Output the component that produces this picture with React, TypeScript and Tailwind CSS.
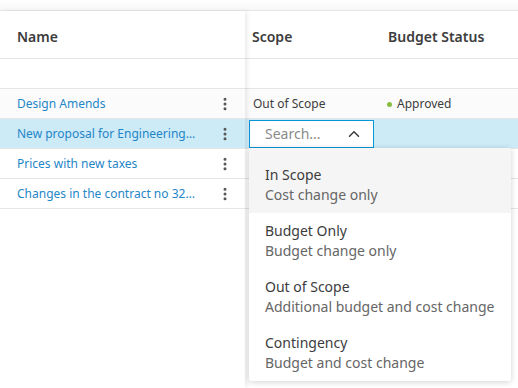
import { ChevronUp, EllipsisVertical } from "lucide-react";

type ChangeRow = {
  name: string;
  scope: string;
  status: string;
  selected?: boolean;
  tinted?: boolean;
};

const rows: ChangeRow[] = [
  { name: "Design Amends", scope: "Out of Scope", status: "Approved", tinted: true },
  { name: "New proposal for Engineering services", scope: "", status: "", selected: true },
  { name: "Prices with new taxes", scope: "", status: "" },
  { name: "Changes in the contract no 3245-AB", scope: "", status: "" },
];

const scopeOptions = [
  { title: "In Scope", hint: "Cost change only" },
  { title: "Budget Only", hint: "Budget change only" },
  { title: "Out of Scope", hint: "Additional budget and cost change" },
  { title: "Contingency", hint: "Budget and cost change" },
];

function rowTone(row: ChangeRow) {
  if (row.selected) return "bg-[#cdeaf7]";
  if (row.tinted) return "bg-[#fbfbfb]";
  return "bg-white";
}

function ScopeMenu() {
  return (
    <div className="absolute left-[4px] top-[28px] z-20 w-[262px] rounded-[3px] bg-white shadow-[0_1px_6px_rgba(0,0,0,0.18)]">
      {scopeOptions.map((option, index) => (
        <div
          className={
            index === 0
              ? "bg-[#f5f5f5] px-4 pb-2 pt-[17px]"
              : "px-4 pb-2 pt-2"
          }
          key={option.title}
        >
          <div className="text-[14px] leading-5 text-[#3c3c3c]">{option.title}</div>
          <div className="text-[14px] leading-5 text-[#666]">{option.hint}</div>
        </div>
      ))}
    </div>
  );
}

export default function App() {
  return (
    <div className="h-[388px] w-[518px] overflow-hidden bg-white font-['Noto_Sans',sans-serif] text-[#3c3c3c]">
      <div className="h-[11px] border-b border-[#e6e6e6] bg-gradient-to-b from-white to-[#f6f6f6]" />
      <div className="flex h-[377px]">
        <div className="relative z-10 w-[245px] shrink-0 bg-white shadow-[3px_0_5px_-1px_rgba(0,0,0,0.09)]">
          <div className="flex h-[48px] items-center border-b border-[#e6e6e6] pl-[17px] pt-[3px] text-[14px] font-semibold">
            Name
          </div>
          <div className="h-[30px] border-b border-[#e6e6e6]" />
          {rows.map((row) => (
            <div
              className={`flex h-[30px] items-center justify-between border-b border-[#e6e6e6] pl-[17px] pr-[12px] ${rowTone(row)}`}
              key={row.name}
            >
              <span className="w-[181px] truncate pt-px text-[12px] text-[#1f86c7]">{row.name}</span>
              <EllipsisVertical size={16} strokeWidth={2.5} className="shrink-0 text-[#555]" />
            </div>
          ))}
        </div>

        <div className="min-w-0 flex-1">
          <div className="flex h-[48px] items-center border-b border-[#e6e6e6] pt-[3px] text-[14px] font-semibold">
            <div className="w-[135px] pl-[7px]">Scope</div>
            <div className="pl-[8px]">Budget Status</div>
          </div>
          <div className="h-[30px] border-b border-[#e6e6e6]" />
          {rows.map((row) => (
            <div
              className={`flex h-[30px] items-center border-b border-[#e6e6e6] text-[12px] ${rowTone(row)}`}
              key={row.name}
            >
              <div className="relative w-[135px] pl-[4px]">
                {row.selected ? (
                  <>
                    <div className="flex h-[28px] w-[125px] items-center justify-between border border-[#0696d7] bg-white pl-[15px] pr-[10px]">
                      <span className="text-[14px] text-[#8a8a8a]">Search...</span>
                      <ChevronUp size={18} strokeWidth={2} className="text-[#3c3c3c]" />
                    </div>
                    <ScopeMenu />
                  </>
                ) : (
                  <span className="pl-[4px]">{row.scope}</span>
                )}
              </div>
              {row.status ? (
                <div className="flex items-center gap-[5px] pl-[7px] pt-px">
                  <span className="size-[5px] rounded-full bg-[#87bc40]" />
                  {row.status}
                </div>
              ) : null}
            </div>
          ))}
        </div>
      </div>
    </div>
  );
}
